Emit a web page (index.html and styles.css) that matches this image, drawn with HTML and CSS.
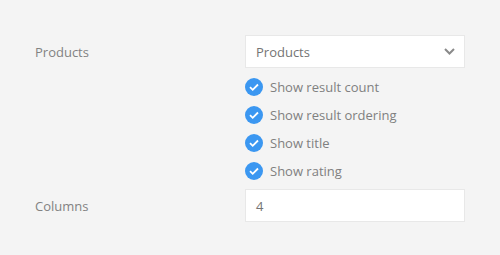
FILE: index.html
```html
<!DOCTYPE html>
<html lang="en">
<head>
  <meta charset="UTF-8" />
  <title>Products settings</title>
  <link rel="stylesheet" href="styles.css">
</head>
<body>
  <div class="settings">
    <div class="row">
      <label class="row-label" for="source">Products</label>
      <div class="row-control">
        <div class="select">
          <span>Products</span>
          <svg class="chevron" width="11" height="7" viewBox="0 0 11 7">
            <path d="M1 1l4.5 4.5L10 1" fill="none" stroke="#8a8a8a" stroke-width="2"/>
          </svg>
        </div>
        <ul class="checks">
          <li><span class="tick"><svg width="18" height="18" viewBox="0 0 18 18"><circle cx="9" cy="9" r="9" fill="#3b97f1"/><path d="M5 9.2l2.7 2.6L13 6.5" fill="none" stroke="#fff" stroke-width="1.8"/></svg></span>Show result count</li>
          <li><span class="tick"><svg width="18" height="18" viewBox="0 0 18 18"><circle cx="9" cy="9" r="9" fill="#3b97f1"/><path d="M5 9.2l2.7 2.6L13 6.5" fill="none" stroke="#fff" stroke-width="1.8"/></svg></span>Show result ordering</li>
          <li><span class="tick"><svg width="18" height="18" viewBox="0 0 18 18"><circle cx="9" cy="9" r="9" fill="#3b97f1"/><path d="M5 9.2l2.7 2.6L13 6.5" fill="none" stroke="#fff" stroke-width="1.8"/></svg></span>Show title</li>
          <li><span class="tick"><svg width="18" height="18" viewBox="0 0 18 18"><circle cx="9" cy="9" r="9" fill="#3b97f1"/><path d="M5 9.2l2.7 2.6L13 6.5" fill="none" stroke="#fff" stroke-width="1.8"/></svg></span>Show rating</li>
        </ul>
      </div>
    </div>
    <div class="row">
      <label class="row-label" for="columns">Columns</label>
      <div class="row-control">
        <div class="field" id="columns">4</div>
      </div>
    </div>
  </div>
</body>
</html>
```

FILE: styles.css
```css
body {
  margin: 0;
  background: #f4f4f4;
  font-family: "Open Sans", sans-serif;
  font-size: 13px;
  color: #808080;
}

.settings {
  padding: 35px 0 0 35px;
}

.row {
  display: grid;
  grid-template-columns: 210px 220px;
}

.row-label {
  height: 33px;
  line-height: 34px;
  color: #828282;
}

.select,
.field {
  box-sizing: border-box;
  height: 33px;
  background: #fff;
  border: 1px solid #e8e8e8;
  padding: 0 10px;
  display: flex;
  align-items: center;
  justify-content: space-between;
  color: #747474;
}

.chevron {
  margin-right: -1px;
}

.checks {
  list-style: none;
  margin: 10px 0 9px;
  padding: 0;
  display: flex;
  flex-direction: column;
  gap: 10px;
}

.checks li {
  display: flex;
  align-items: center;
  height: 18px;
  gap: 7px;
  color: #808080;
}

.tick svg {
  display: block;
}
```
